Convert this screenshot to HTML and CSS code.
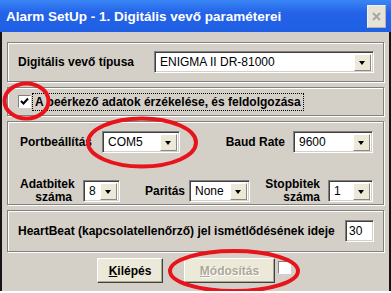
FILE: index.html
```html
<!DOCTYPE html>
<html lang="hu">
<head>
    <meta charset="UTF-8">
    <title>Alarm SetUp</title>
    <link rel="stylesheet" href="styles.css">
</head>
<body>
    <div class="window">
        <div class="titlebar">
            <span class="title">Alarm SetUp - 1. Digitális vevő paraméterei</span>
            <span class="close">
                <svg width="9" height="9" viewBox="0 0 9 9"><path d="M1 1L8 8M8 1L1 8" stroke="#a8a8a0" stroke-width="2"/></svg>
            </span>
        </div>
        <div class="client">
            <div class="frame frame-type">
                <span class="lbl lbl-type">Digitális vevő típusa</span>
                <div class="combo w-type"><span class="val">ENIGMA II DR-81000</span><span class="arrow"></span></div>
            </div>

            <div class="frame frame-check">
                <span class="check">
                    <svg width="9" height="9" viewBox="0 0 9 9"><path d="M1 4L3.5 6.5L8 1.5" fill="none" stroke="#000" stroke-width="2"/></svg>
                </span>
                <span class="focus">A beérkező adatok érzékelése, és feldolgozása</span>
            </div>

            <div class="frame frame-port">
                <div class="row row-1">
                    <span class="lbl lbl-port">Portbeállítás</span>
                    <div class="combo w-port"><span class="val">COM5</span><span class="arrow"></span></div>
                    <span class="lbl lbl-baud">Baud Rate</span>
                    <div class="combo w-baud"><span class="val">9600</span><span class="arrow"></span></div>
                </div>
                <div class="row row-2">
                    <span class="lbl lbl-two lbl-data">Adatbitek<br>száma</span>
                    <div class="combo w-data"><span class="val">8</span><span class="arrow"></span></div>
                    <span class="lbl lbl-parity">Paritás</span>
                    <div class="combo w-parity"><span class="val">None</span><span class="arrow"></span></div>
                    <span class="lbl lbl-two lbl-stop">Stopbitek<br>száma</span>
                    <div class="combo w-stop"><span class="val">1</span><span class="arrow"></span></div>
                </div>
            </div>

            <div class="frame frame-hb">
                <span class="lbl lbl-hb">HeartBeat (kapcsolatellenőrző) jel ismétlődésének ideje</span>
                <div class="edit"><span class="val">30</span></div>
            </div>

            <div class="buttons">
                <button class="btn btn-exit"><u>K</u>ilépés</button>
                <button class="btn btn-save" disabled><u>M</u>ódosítás</button>
                <span class="mini-check"></span>
            </div>
        </div>

        <!-- piros jelölések -->
        <svg class="marks" width="391" height="293" viewBox="0 0 391 293">
            <ellipse cx="26.5" cy="101" rx="22" ry="17.5" fill="none" stroke="#e8141c" stroke-width="4"/>
            <ellipse cx="142" cy="142.5" rx="54" ry="24" fill="none" stroke="#e8141c" stroke-width="4"/>
            <ellipse cx="234" cy="271" rx="64" ry="20" fill="none" stroke="#e8141c" stroke-width="4"/>
        </svg>
    </div>
</body>
</html>
```

FILE: styles.css
```css
body {
    margin: 0;
    background-color: #ffffff;
    font-family: "Liberation Sans", Arial, sans-serif;
}
.window {
    position: relative;
    width: 391px;
    height: 291px;
    box-sizing: border-box;
    overflow: hidden;
}
.titlebar {
    height: 32px;
    display: flex;
    align-items: center;
    justify-content: space-between;
    padding: 0 5px 0 6px;
    background: linear-gradient(#3a86f6, #2463e8 40%, #1f5fe4);
}
.title {
    color: #fff;
    font-weight: bold;
    font-size: 13.5px;
}
.close {
    width: 17px;
    height: 21px;
    display: flex;
    align-items: center;
    justify-content: center;
    background-color: #e6e2d8;
    border: 1px solid #f4f2ec;
    border-right-color: #b8b4a8;
    border-bottom-color: #b8b4a8;
}
.client {
    height: 259px;
    background-color: #d4d0c8;
    border: 2px solid #141414;
    border-top: none;
    padding: 10px 5px 0 5px;
}
/* Marcok (etched border) */
.frame {
    border: 1px solid #808080;
    box-shadow: inset 1px 1px 0 #fff, 1px 1px 0 #fff;
    margin-bottom: 5px;
    display: flex;
    align-items: center;
    box-sizing: border-box;
}
.frame-type {
    height: 40px;
    padding: 0 9px 0 10px;
    justify-content: space-between;
}
.frame-check {
    height: 29px;
    padding-left: 10px;
}
.frame-port {
    height: 84px;
    flex-direction: column;
    align-items: stretch;
    padding: 9px 9px 0 12px;
}
.frame-hb {
    height: 42px;
    padding: 0 9px 0 10px;
    justify-content: space-between;
}
.lbl {
    font-weight: bold;
    font-size: 12px;
    color: #000;
}
.row {
    display: flex;
    align-items: center;
}
.row-2 {
    margin-top: 25px;
}
.lbl-port {
    width: 82px;
}
.lbl-baud {
    width: 105px;
    padding-right: 8px;
    text-align: right;
}
.lbl-two {
    line-height: 13px;
    text-align: right;
}
.lbl-data {
    width: 52px;
    margin-right: 11px;
}
.lbl-parity {
    width: 65px;
    padding-right: 4px;
    text-align: right;
}
.lbl-stop {
    width: 70px;
    margin-right: 8px;
}
/* Legördülő listák */
.combo, .edit {
    height: 22px;
    box-sizing: border-box;
    background-color: #fff;
    border: 1px solid;
    border-color: #808080 #fff #fff #808080;
    box-shadow: inset 1px 1px 0 #404040, inset -1px -1px 0 #d4d0c8;
    display: flex;
    align-items: center;
    justify-content: space-between;
    padding: 2px;
}
.val {
    font-size: 12px;
    padding-left: 3px;
    color: #000;
}
.arrow {
    width: 17px;
    height: 17px;
    box-sizing: border-box;
    background-color: #ece9d8;
    border: 1px solid;
    border-color: #fff #8c8a80 #8c8a80 #fff;
    position: relative;
}
.arrow::after {
    content: "";
    position: absolute;
    left: 4px;
    top: 6px;
    border-left: 3.5px solid transparent;
    border-right: 3.5px solid transparent;
    border-top: 4px solid #000;
}
.w-type { width: 220px; }
.w-port { width: 78px; }
.w-baud { width: 80px; }
.w-data { width: 37px; }
.w-parity { width: 61px; }
.w-stop { width: 45px; }
.edit {
    width: 29px;
    padding-left: 0;
}
/* Jelölőnégyzet */
.check {
    width: 13px;
    height: 13px;
    box-sizing: border-box;
    background-color: #fff;
    border: 1px solid;
    border-color: #808080 #fff #fff #808080;
    display: flex;
    align-items: center;
    justify-content: center;
    margin-right: 2px;
}
.focus {
    font-weight: bold;
    font-size: 12px;
    outline: 1px dotted #000;
    padding: 1px 2px;
}
/* Gombok */
.buttons {
    display: flex;
    align-items: flex-start;
    padding: 1px 0 0 90px;
}
.btn {
    height: 25px;
    font-family: "Liberation Sans", Arial, sans-serif;
    font-weight: bold;
    font-size: 12px;
    background-color: #ece9d8;
    border: 1px solid;
    border-color: #fff #404040 #404040 #fff;
    box-shadow: inset -1px -1px 0 #aca899;
    padding: 0;
    color: #000;
}
.btn-exit {
    width: 66px;
    margin-right: 21px;
}
.btn-save {
    width: 91px;
    color: #aca899;
    text-shadow: 1px 1px 0 #fff;
    margin-right: 3px;
}
.mini-check {
    width: 13px;
    height: 13px;
    box-sizing: border-box;
    background-color: #fff;
    border: 1px solid;
    border-color: #808080 #fff #fff #808080;
    margin-top: 3px;
}
.marks {
    position: absolute;
    left: 0;
    top: 0;
    pointer-events: none;
}
```
